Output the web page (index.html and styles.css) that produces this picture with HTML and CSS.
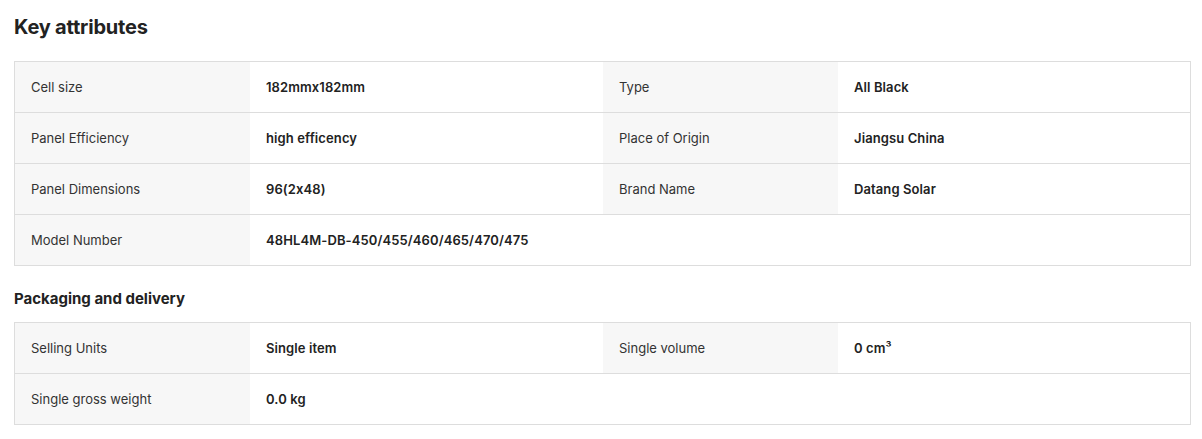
FILE: index.html
```html
<!DOCTYPE html>
<html>
<head>
<meta charset="utf-8">
<link rel="stylesheet" href="styles.css">
</head>
<body>
<div class="wrap">
  <h2 class="title">Key attributes</h2>
  <div class="table">
    <div class="row">
      <div class="label">Cell size</div><div class="value">182mmx182mm</div>
      <div class="label">Type</div><div class="value">All Black</div>
    </div>
    <div class="row">
      <div class="label">Panel Efficiency</div><div class="value">high efficency</div>
      <div class="label">Place of Origin</div><div class="value">Jiangsu China</div>
    </div>
    <div class="row">
      <div class="label">Panel Dimensions</div><div class="value">96(2x48)</div>
      <div class="label">Brand Name</div><div class="value">Datang Solar</div>
    </div>
    <div class="row">
      <div class="label">Model Number</div><div class="value">48HL4M-DB-450/455/460/465/470/475</div>
      <div class="empty"></div>
    </div>
  </div>
  <h3 class="subtitle">Packaging and delivery</h3>
  <div class="table">
    <div class="row">
      <div class="label">Selling Units</div><div class="value">Single item</div>
      <div class="label">Single volume</div><div class="value">0 cm³</div>
    </div>
    <div class="row">
      <div class="label">Single gross weight</div><div class="value">0.0 kg</div>
      <div class="empty"></div>
    </div>
  </div>
</div>
</body>
</html>
```
FILE: styles.css
```css
* { box-sizing: border-box; }
body {
  margin: 0;
  font-family: Inter, "Noto Sans", sans-serif;
  font-feature-settings: "calt" 0;
  color: #222;
  background: #fff;
}
.wrap {
  width: 1177px;
  margin-left: 14px;
  padding-top: 14px;
}
.title {
  margin: 0;
  font-size: 20px;
  line-height: 26px;
  font-weight: 700;
  letter-spacing: -0.2px;
  color: #222;
}
.subtitle {
  margin: 23px 0 13px;
  font-size: 15px;
  line-height: 20px;
  font-weight: 700;
  color: #222;
}
.table {
  margin-top: 21px;
  border: 1px solid #ddd;
  border-bottom: none;
}
.subtitle + .table { margin-top: 0; }
.row {
  display: grid;
  grid-template-columns: 235px 353px 235px 352px;
  border-bottom: 1px solid #ddd;
  height: 51px;
}
.label, .value {
  display: flex;
  align-items: center;
  padding-left: 16px;
  font-size: 13px;
}
.label {
  background: #f7f7f7;
  color: #333;
}
.value {
  font-weight: 600;
  color: #222;
  letter-spacing: 0.1px;
}
.empty { grid-column: span 2; }
```
